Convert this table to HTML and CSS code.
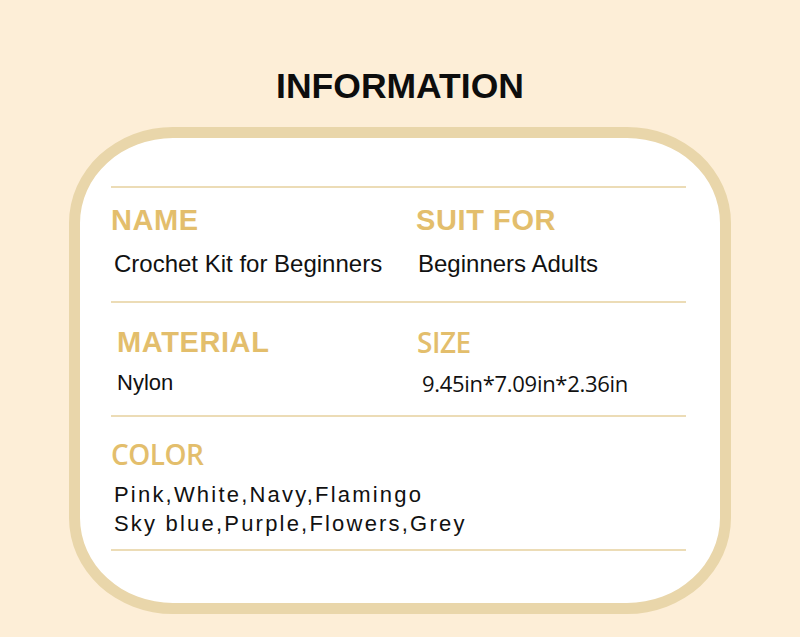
FILE: index.html
```html
<!DOCTYPE html>
<html lang="en">
<head>
<meta charset="utf-8">
<title>Information</title>
<link rel="stylesheet" href="styles.css">
</head>
<body>
<main class="page">
  <h1 class="title">INFORMATION</h1>
  <section class="card">
    <div class="row row-1">
      <div class="cell">
        <h2 class="label label-arial">NAME</h2>
        <p class="value value-arial indent-3">Crochet Kit for Beginners</p>
      </div>
      <div class="cell">
        <h2 class="label label-arial">SUIT FOR</h2>
        <p class="value value-arial indent-2">Beginners Adults</p>
      </div>
    </div>
    <div class="row row-2">
      <div class="cell">
        <h2 class="label label-arial indent-6">MATERIAL</h2>
        <p class="value value-arial value-small indent-6">Nylon</p>
      </div>
      <div class="cell">
        <h2 class="label label-open indent-1">SIZE</h2>
        <p class="value value-open indent-6">9.45in*7.09in*2.36in</p>
      </div>
    </div>
    <div class="row row-3">
      <div class="cell cell-wide">
        <h2 class="label label-open">COLOR</h2>
        <p class="value value-colors indent-3">Pink,White,Navy,Flamingo<br>Sky blue,Purple,Flowers,Grey</p>
      </div>
    </div>
  </section>
</main>
</body>
</html>
```
FILE: styles.css
```css
* { box-sizing: border-box; }
html, body { margin: 0; padding: 0; }
body {
  background: #fdeed7;
  font-family: "Liberation Sans", Arial, sans-serif;
  color: #111;
  width: 800px;
  height: 637px;
  overflow: hidden;
}
.page {
  padding-top: 69px;
  display: flex;
  flex-direction: column;
  align-items: center;
}
.title {
  margin: 0;
  font-family: "Liberation Sans", Arial, sans-serif;
  font-weight: 700;
  font-size: 35.5px;
  line-height: 1;
  color: #0d0d0d;
}
.card {
  margin-top: 22px;
  width: 662px;
  height: 487px;
  background: #fff;
  border: 11px solid #e9d6aa;
  border-radius: 104px / 96px;
  padding: 48px 34px 0 31px;
}
.row {
  display: grid;
  grid-template-columns: 305px 1fr;
  border-top: 2px solid #ecdcb6;
}
.row-1 { padding: 18px 0 25px; }
.row-2 { padding: 25px 0 21px; }
.row-3 { padding: 23px 0 11px; border-bottom: 2px solid #ecdcb6; }
.cell { display: flex; flex-direction: column; }
.cell-wide { grid-column: 1 / -1; }
.label {
  margin: 0;
  color: #e3be6c;
  line-height: 1;
}
.label-arial {
  font-family: "Liberation Sans", Arial, sans-serif;
  font-weight: 700;
  font-size: 29px;
  letter-spacing: 0.6px;
}
.label-open {
  font-family: "Open Sans", sans-serif;
  font-weight: 600;
  font-size: 28px;
  letter-spacing: -0.5px;
}
.value { margin: 0; line-height: 1; }
.value-arial {
  margin-top: 17px;
  font-size: 24px;
  font-family: "Liberation Sans", Arial, sans-serif;
}
.row-2 .value-arial { margin-top: 15px; }
.value-small { font-size: 22px; }
.value-open {
  margin-top: 16px;
  font-family: "Open Sans", sans-serif;
  font-size: 22px;
  letter-spacing: -0.3px;
}
.value-colors {
  margin-top: 12px;
  font-family: "Liberation Sans", Arial, sans-serif;
  font-size: 22px;
  line-height: 29px;
  letter-spacing: 2.2px;
}
.indent-1 { padding-left: 1px; }
.indent-2 { padding-left: 2px; }
.indent-3 { padding-left: 3px; }
.indent-6 { padding-left: 6px; }
```
